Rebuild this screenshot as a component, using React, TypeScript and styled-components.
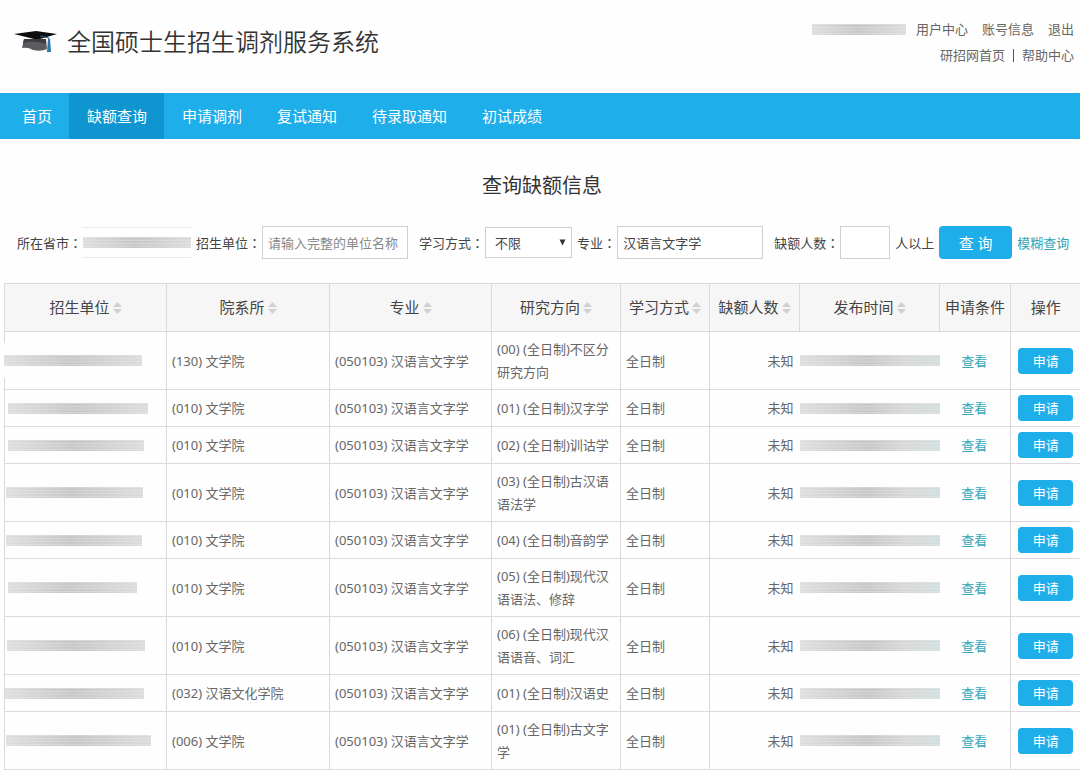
import React from "react";
import styled, { createGlobalStyle } from "styled-components";

const GlobalStyle = createGlobalStyle`
  *, *::before, *::after { box-sizing: border-box; }
  body {
    margin: 0;
    background: #fefefe;
    color: #444;
    font-family: "Noto Sans", "Noto Sans CJK SC", sans-serif;
    font-size: 13px;
  }
  a { text-decoration: none; color: inherit; }
  button, input, select { font: inherit; color: inherit; margin: 0; }
`;

const blue = "#1eaeea";
const teal = "#35a6b8";
const line = "#ddd8dc";

const Header = styled.header`
  display: flex;
  align-items: center;
  justify-content: space-between;
  padding: 16px 6px 25px 14px;
`;

const Brand = styled.div`
  display: flex;
  align-items: center;
  gap: 9px;
`;

const SiteName = styled.h1`
  margin: 0;
  font-size: 24px;
  line-height: 32px;
  font-weight: 350;
  color: #333;
`;

const UserLinks = styled.div`
  display: flex;
  flex-direction: column;
  align-items: flex-end;
  color: #666;
`;

const LinkRow = styled.div<{ $gap: number }>`
  display: flex;
  align-items: center;
  gap: ${(p) => p.$gap}px;
  line-height: 26px;
`;

const Divider = styled.span`
  width: 1px;
  height: 13px;
  background: #555;
`;

const Masked = styled.span<{ $w?: number; $tint?: boolean }>`
  display: block;
  width: ${(p) => (p.$w ? `${p.$w}px` : "100%")};
  height: 11px;
  background:
    repeating-linear-gradient(180deg, rgba(255, 255, 255, 0.2) 0 1px, transparent 1px 3px),
    linear-gradient(90deg, #dedede, #c9c8c9 48%, ${(p) => (p.$tint ? "#d8d8d8 75%, #d2dede" : "#dddcdd")});
`;

const Nav = styled.nav`
  display: flex;
  padding-left: 4px;
  background: ${blue};
`;

const NavItem = styled.a<{ $active?: boolean }>`
  padding: 0 17px 0 18px;
  font-size: 15px;
  line-height: 46px;
  color: #fff;
  background: ${(p) => (p.$active ? "#0f95d0" : "transparent")};
`;

const Main = styled.main`
  padding: 32px 0 0 4px;
`;

const Title = styled.h2`
  margin: 0 0 25px;
  text-align: center;
  font-size: 20px;
  line-height: 30px;
  font-weight: 400;
  color: #333;
`;

const Filters = styled.form`
  display: flex;
  align-items: center;
  gap: 5px;
  padding-left: 13px;
  margin-bottom: 24px;
  white-space: nowrap;
`;

const Field = styled.div<{ $space?: boolean }>`
  display: flex;
  align-items: center;
  gap: 1px;
  margin-right: ${(p) => (p.$space ? 6 : 0)}px;
`;

const Colon = styled.span`
  font-family: "Noto Sans CJK TC", sans-serif;
`;

const MaskedBox = styled.div`
  padding: 9px 0;
  border-top: 1px solid #e8e8e8;
  border-bottom: 1px solid #e8e8e8;
`;

const TextInput = styled.input<{ $w: number }>`
  width: ${(p) => p.$w}px;
  height: 33px;
  padding: 0 5px;
  border: 1px solid #cfcfcf;
  background: #fff;
  &::placeholder { color: #888; opacity: 1; }
`;

const SelectWrap = styled.div`
  position: relative;
  svg {
    position: absolute;
    right: 6px;
    top: 12px;
    pointer-events: none;
  }
`;

const Select = styled.select`
  display: block;
  width: 87px;
  height: 31px;
  padding: 0 9px;
  border: 1px solid #cfcfcf;
  border-radius: 0;
  background: #fff;
  appearance: none;
`;

const SearchButton = styled.button`
  width: 73px;
  height: 33px;
  padding: 0;
  border: 0;
  border-radius: 4px;
  background: ${blue};
  color: #fff;
  font-size: 15px;
`;

const TealLink = styled.a`
  color: ${teal};
`;

const Table = styled.table`
  width: 100%;
  table-layout: fixed;
  border-collapse: collapse;
  line-height: 23px;
  color: #666;
`;

const HeadCell = styled.th`
  height: 48px;
  padding: 0;
  border: 1px solid ${line};
  background: #f7f6f7;
  font-size: 15px;
  font-weight: 400;
  color: #444;
  white-space: nowrap;
  &:last-child { border-right: 0; }
`;

const SortIcon = styled.svg`
  margin-left: 3px;
  vertical-align: -1px;
`;

const Row = styled.tr`
  height: 37px;
`;

const Cell = styled.td<{ $align?: "right" | "center"; $flush?: boolean; $open?: boolean }>`
  padding: ${(p) => (p.$flush ? "0" : "6px 6px 5px 5px")};
  border-bottom: 1px solid ${line};
  border-left: ${(p) => (p.$open ? "0" : `1px solid ${line}`)};
  text-align: ${(p) => p.$align ?? "left"};
`;

const UnitMask = styled.div<{ $inset: number }>`
  position: relative;
  padding: 12px 0;
  margin-left: ${(p) => p.$inset - 1}px;
  background: ${(p) => (p.$inset === 0 ? "#fefefe" : "transparent")};
`;

const ApplyButton = styled.button`
  display: block;
  width: 55px;
  height: 26px;
  margin: 0 auto;
  padding: 0;
  border: 0;
  border-radius: 4px;
  background: ${blue};
  color: #fff;
  line-height: 26px;
`;

const CapLogo = () => (
  <svg width="44" height="24" viewBox="0 0 44 24" aria-hidden="true">
    <path d="M10 9 L8 18 Q14 17 19 20 Q27 22 33 19 L32 9 Z" fill="#5c5c60" />
    <path d="M10 9 L9 13 Q20 10 32 14 L32 9 Z" fill="#3d3d41" />
    <path d="M0 4 L22 1 L43 4 L26 9 L20 9 Z" fill="#0d0d10" />
    <path d="M26 6 L35 8 L35 13" fill="none" stroke="#2a5f86" strokeWidth="1" />
    <path d="M34 9 H36 L37 22 H33 Z" fill="#2b79ab" />
  </svg>
);

const Sort = () => (
  <SortIcon width="9" height="12" viewBox="0 0 9 12" aria-hidden="true">
    <path d="M4.5 0 L9 5 H0 Z M0 7 H9 L4.5 12 Z" fill="#d3d0d3" />
  </SortIcon>
);

const navItems = ["首页", "缺额查询", "申请调剂", "复试通知", "待录取通知", "初试成绩"];

const columns = [
  { label: "招生单位", width: 162, sort: true },
  { label: "院系所", width: 163, sort: true },
  { label: "专业", width: 162, sort: true },
  { label: "研究方向", width: 129, sort: true },
  { label: "学习方式", width: 89, sort: true },
  { label: "缺额人数", width: 90, sort: true },
  { label: "发布时间", width: 140, sort: true },
  { label: "申请条件", width: 71, sort: false },
  { label: "操作", width: 70, sort: false },
];

const rows = [
  { inset: 0, mask: 138, dept: "(130) 文学院", field: "(00) (全日制)不区分研究方向" },
  { inset: 4, mask: 140, dept: "(010) 文学院", field: "(01) (全日制)汉字学" },
  { inset: 4, mask: 136, dept: "(010) 文学院", field: "(02) (全日制)训诂学" },
  { inset: 2, mask: 137, dept: "(010) 文学院", field: "(03) (全日制)古汉语语法学" },
  { inset: 2, mask: 136, dept: "(010) 文学院", field: "(04) (全日制)音韵学" },
  { inset: 4, mask: 129, dept: "(010) 文学院", field: "(05) (全日制)现代汉语语法、修辞" },
  { inset: 3, mask: 138, dept: "(010) 文学院", field: "(06) (全日制)现代汉语语音、词汇" },
  { inset: 1, mask: 139, dept: "(032) 汉语文化学院", field: "(01) (全日制)汉语史" },
  { inset: 2, mask: 145, dept: "(006) 文学院", field: "(01) (全日制)古文字学" },
];

export default function App() {
  return (
    <>
      <GlobalStyle />
      <Header>
        <Brand>
          <CapLogo />
          <SiteName>全国硕士生招生调剂服务系统</SiteName>
        </Brand>
        <UserLinks>
          <LinkRow $gap={14}>
            <LinkRow $gap={10}>
              <Masked $w={94} />
              <a href="#user">用户中心</a>
            </LinkRow>
            <a href="#account">账号信息</a>
            <a href="#logout">退出</a>
          </LinkRow>
          <LinkRow $gap={8}>
            <a href="#home">研招网首页</a>
            <Divider />
            <a href="#help">帮助中心</a>
          </LinkRow>
        </UserLinks>
      </Header>
      <Nav>
        {navItems.map((item, i) => (
          <NavItem key={item} href={`#nav-${i}`} $active={i === 1}>
            {item}
          </NavItem>
        ))}
      </Nav>
      <Main>
        <Title>查询缺额信息</Title>
        <Filters onSubmit={(e) => e.preventDefault()}>
          <Field>
            <span>所在省市<Colon>：</Colon></span>
            <MaskedBox>
              <Masked $w={108} />
            </MaskedBox>
          </Field>
          <Field $space>
            <label htmlFor="unit">招生单位<Colon>：</Colon></label>
            <TextInput id="unit" $w={146} placeholder="请输入完整的单位名称" />
          </Field>
          <Field>
            <label htmlFor="mode">学习方式<Colon>：</Colon></label>
            <SelectWrap>
              <Select id="mode" defaultValue="all">
                <option value="all">不限</option>
              </Select>
              <svg width="7" height="7" viewBox="0 0 7 7" aria-hidden="true">
                <path d="M0.5 0.5 H6.5 L3.5 6.5 Z" fill="#333" />
              </svg>
            </SelectWrap>
          </Field>
          <Field $space>
            <label htmlFor="major">专业<Colon>：</Colon></label>
            <TextInput id="major" $w={146} defaultValue="汉语言文字学" />
          </Field>
          <Field>
            <label htmlFor="count">缺额人数<Colon>：</Colon></label>
            <TextInput id="count" $w={50} />
          </Field>
          <span>人以上</span>
          <SearchButton type="submit">查 询</SearchButton>
          <TealLink href="#fuzzy">模糊查询</TealLink>
        </Filters>
        <Table>
          <colgroup>
            {columns.map((c) => (
              <col key={c.label} width={c.width} />
            ))}
          </colgroup>
          <thead>
            <tr>
              {columns.map((c) => (
                <HeadCell key={c.label} scope="col">
                  {c.label}
                  {c.sort && <Sort />}
                </HeadCell>
              ))}
            </tr>
          </thead>
          <tbody>
            {rows.map((r) => (
              <Row key={r.dept + r.field}>
                <Cell $flush>
                  <UnitMask $inset={r.inset}>
                    <Masked $w={r.mask} />
                  </UnitMask>
                </Cell>
                <Cell>{r.dept}</Cell>
                <Cell>(050103) 汉语言文字学</Cell>
                <Cell>{r.field}</Cell>
                <Cell>全日制</Cell>
                <Cell $align="right">未知</Cell>
                <Cell $flush $open>
                  <Masked $tint />
                </Cell>
                <Cell $align="center" $open>
                  <TealLink href="#view">查看</TealLink>
                </Cell>
                <Cell $flush>
                  <ApplyButton type="button">申请</ApplyButton>
                </Cell>
              </Row>
            ))}
          </tbody>
        </Table>
      </Main>
    </>
  );
}
